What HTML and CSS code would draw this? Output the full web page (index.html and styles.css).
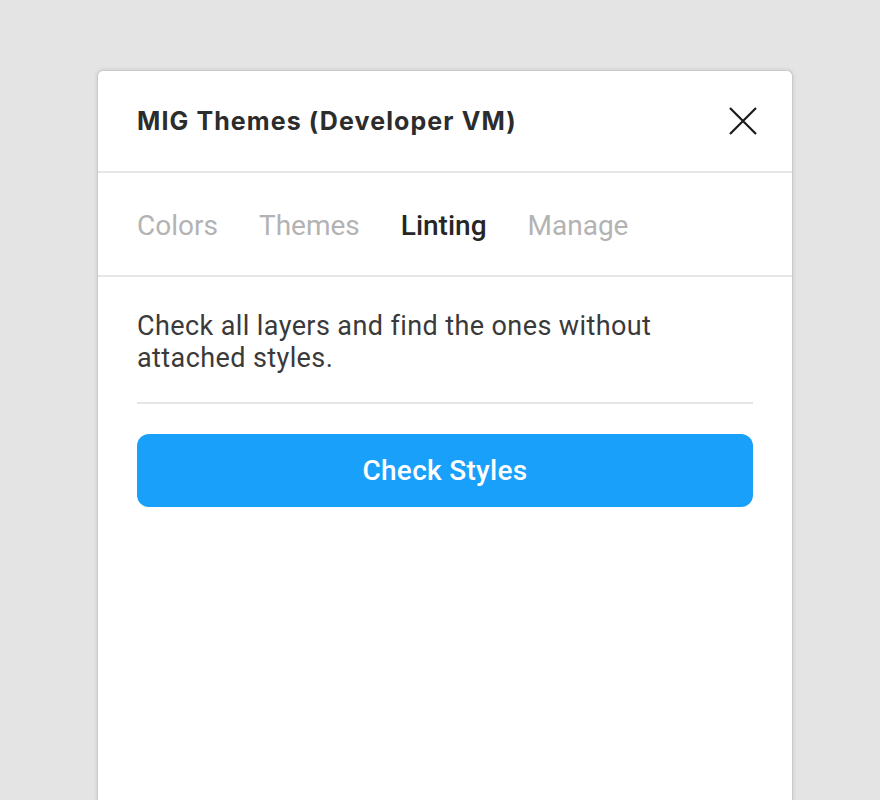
FILE: index.html
```html
<!DOCTYPE html>
<html lang="en">
<head>
<meta charset="utf-8">
<title>MIG Themes</title>
<link rel="stylesheet" href="styles.css">
</head>
<body>
<div class="window">
  <header class="header">
    <h1 class="title">MIG Themes (Developer VM)</h1>
    <button class="close" aria-label="Close">
      <svg width="28" height="28" viewBox="0 0 28 28"><path d="M1 1 L27 27 M27 1 L1 27" stroke="#1a1a1a" stroke-width="2.2" fill="none"/></svg>
    </button>
  </header>
  <nav class="tabs">
    <span class="tab">Colors</span>
    <span class="tab">Themes</span>
    <span class="tab active">Linting</span>
    <span class="tab">Manage</span>
  </nav>
  <section class="content">
    <p class="desc">Check all layers and find the ones without attached styles.</p>
    <hr class="divider">
    <button class="primary">Check Styles</button>
  </section>
</div>
</body>
</html>
```

FILE: styles.css
```css
html, body {
  margin: 0;
  height: 100%;
  background: #e4e4e4;
  overflow: hidden;
}

.window {
  margin: 70px 0 0 97px;
  width: 696px;
  height: 730px;
  box-sizing: border-box;
  background: #fff;
  border: 1px solid #c9c9c9;
  border-bottom: 0;
  border-radius: 6px 6px 0 0;
  box-shadow: 0 0 4px rgba(0, 0, 0, 0.12);
  font-family: Roboto, "Liberation Sans", sans-serif;
}

.header {
  height: 100px;
  display: flex;
  align-items: center;
  justify-content: space-between;
  padding: 0 35px 0 39px;
  border-bottom: 2px solid #e6e6e6;
}

.title {
  margin: 0 0 1px;
  font-family: Inter, "Liberation Sans", sans-serif;
  font-weight: 700;
  font-size: 25px;
  letter-spacing: 1.1px;
  color: #2c2c2c;
}

.close {
  border: 0;
  background: none;
  padding: 0;
  width: 28px;
  height: 28px;
  display: flex;
}

.tabs {
  height: 102px;
  display: flex;
  align-items: center;
  gap: 41px;
  padding: 0 39px;
  border-bottom: 2px solid #e6e6e6;
}

.tab {
  font-size: 28px;
  color: #b3b3b3;
  padding-top: 2px;
}

.tab.active {
  color: #262626;
  font-weight: 500;
}

.content {
  padding: 33px 39px 0 39px;
}

.desc {
  margin: 0;
  font-size: 27px;
  line-height: 32px;
  letter-spacing: 0.4px;
  color: #3a3a3a;
  max-width: 570px;
}

.divider {
  margin: 28px 0 30px;
  border: 0;
  border-top: 2px solid #e6e6e6;
}

.primary {
  display: block;
  width: 100%;
  height: 73px;
  border: 0;
  border-radius: 12px;
  background: #18a0fb;
  color: #fff;
  font-family: Roboto, "Liberation Sans", sans-serif;
  font-size: 28px;
  font-weight: 500;
  letter-spacing: 0.3px;
}
```
